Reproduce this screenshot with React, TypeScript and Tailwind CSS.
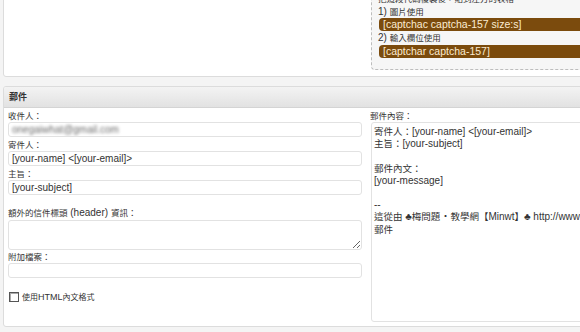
import React from "react";

function T({ s, c = "text-[8.5px]" }: { s: string; c?: string }) {
  const parts = s.split(/([\u2E80-\u9FFF\uFF00-\uFFEF\u3000-\u303F]+)/);
  return (
    <>
      {parts.map((p, i) =>
        i % 2 === 1 ? (
          <span key={i} className={c}>
            {p}
          </span>
        ) : (
          <React.Fragment key={i}>{p}</React.Fragment>
        )
      )}
    </>
  );
}

function Label({ s }: { s: string }) {
  return (
    <div className="h-[12px] leading-[12px] whitespace-nowrap">
      <T s={s} />
    </div>
  );
}

function Input({ value, blur }: { value?: string; blur?: boolean }) {
  if (blur) {
    return (
      <div className="h-[15px] border border-[#e2e2e2] rounded-[3px] bg-white px-[3px] leading-[13px] overflow-hidden">
        <span className="inline-block blur-[1.4px] text-[#6a6a6a]">onegaiwhat@gmail.com</span>
      </div>
    );
  }
  return (
    <input
      readOnly
      defaultValue={value ?? ""}
      className="block w-full h-[15px] border border-[#e2e2e2] rounded-[3px] bg-white px-[3px] text-[10px] leading-[13px] text-[#333] outline-none"
    />
  );
}

const bodyLines = [
  "寄件人：[your-name] <[your-email]>",
  "主旨：[your-subject]",
  "",
  "郵件內文：",
  "[your-message]",
  "",
  "--",
  "這從由 ♣梅問題‧教學網【Minwt】♣ http://www.minwt.com",
  "郵件",
];

export default function App() {
  return (
    <div className="w-[580px] h-[332px] overflow-hidden bg-[#f4f4f4] text-[#333] text-[10px] font-['Liberation_Sans','Noto_Sans_CJK_TC',sans-serif]">
      {/* top panel (cut) */}
      <div className="-mt-[21px] ml-[3px] w-[640px] h-[98px] bg-white border border-[#dcdcdc] rounded-[3px] pt-[7px]">
        <div className="ml-[367px] border border-dashed border-[#bdbdbd] rounded-[4px] bg-[#f6f6f6] pt-[4px] pb-[11px] pl-[6px] leading-[13px]">
          <div className="h-[13px] whitespace-nowrap">
            <T s="把這段代碼複製後，貼到左方的表格" />
          </div>
          <div className="h-[13px] whitespace-nowrap">
            <T s="1) 圖片使用" />
          </div>
          <div className="ml-[1px] h-[13px] leading-[13px] bg-[#7b4b0d] text-[#fbecd2] text-[10.5px] rounded-l-[4px] pl-[4px] whitespace-nowrap">
            [captchac captcha-157 size:s]
          </div>
          <div className="h-[13px] whitespace-nowrap">
            <T s="2) 輸入欄位使用" />
          </div>
          <div className="mt-[1px] ml-[1px] h-[13px] leading-[13px] bg-[#7b4b0d] text-[#fbecd2] text-[10.5px] rounded-l-[4px] pl-[4px] whitespace-nowrap">
            [captchar captcha-157]
          </div>
        </div>
      </div>

      {/* mail panel */}
      <div className="mt-[9px] ml-[3px] w-[640px] h-[241px] bg-white border border-[#dcdcdc] rounded-[3px] overflow-hidden">
        <div className="h-[21px] border-b border-[#d4d4d4] bg-linear-to-b from-[#f3f3f3] to-[#e2e2e2] pl-[5px] font-bold leading-[20px]">
          <T s="郵件" c="text-[9px]" />
        </div>
        <div className="flex pt-[2px] pl-[4px]">
          <div className="w-[354px] flex flex-col">
            <Label s="收件人：" />
            <Input blur />
            <div className="mt-[2px]">
              <Label s="寄件人：" />
              <Input value="[your-name] <[your-email]>" />
            </div>
            <div className="mt-[2px]">
              <Label s="主旨：" />
              <Input value="[your-subject]" />
            </div>
            <div className="mt-[12px]">
              <Label s="額外的信件標頭 (header) 資訊：" />
              <textarea
                readOnly
                className="block w-full h-[30px] mt-[1px] border border-[#e2e2e2] rounded-[3px] bg-white outline-none resize-y"
              />
            </div>
            <div className="mt-[1px]">
              <Label s="附加檔案：" />
              <Input value="" />
            </div>
            <div className="mt-[14px] ml-[1px] flex items-center gap-[3px] h-[10px]">
              <div className="w-[10px] h-[10px] border border-[#555] bg-white shadow-[inset_1px_1px_0_#aaa]" />
              <span className="leading-[10px] whitespace-nowrap text-[9px]">
                <T s="使用HTML內文格式" c="text-[8px]" />
              </span>
            </div>
          </div>
          <div className="ml-[8px] w-[270px] flex flex-col">
            <Label s="郵件內容：" />
            <div className="ml-[1px] h-[200px] border border-[#e2e2e2] rounded-[3px] bg-white pt-[3px] pl-[2px] leading-[12.2px] whitespace-pre overflow-hidden">
              {bodyLines.map((l, i) => (
                <div key={i} className="h-[12.2px]">
                  <T s={l} c="text-[9.5px]" />
                </div>
              ))}
            </div>
          </div>
        </div>
      </div>
    </div>
  );
}
